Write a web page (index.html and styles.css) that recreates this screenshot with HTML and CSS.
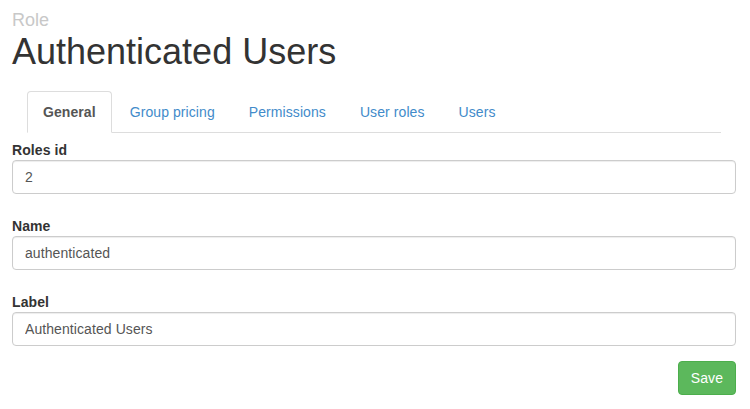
FILE: index.html
```html
<!DOCTYPE html>
<html>
<head>
<meta charset="utf-8">
<title>Role</title>
<link rel="stylesheet" href="styles.css">
</head>
<body>
<div class="page">
  <div class="subtitle">Role</div>
  <h1 class="title">Authenticated Users</h1>
  <div class="tabs-wrap">
    <ul class="tabs">
      <li class="tab active"><a href="#">General</a></li>
      <li class="tab"><a href="#">Group pricing</a></li>
      <li class="tab"><a href="#">Permissions</a></li>
      <li class="tab"><a href="#">User roles</a></li>
      <li class="tab"><a href="#">Users</a></li>
    </ul>
  </div>
  <form class="form">
    <div class="field first">
      <label class="label">Roles id</label>
      <input class="input" type="text" value="2">
    </div>
    <div class="field">
      <label class="label">Name</label>
      <input class="input" type="text" value="authenticated">
    </div>
    <div class="field">
      <label class="label">Label</label>
      <input class="input" type="text" value="Authenticated Users">
    </div>
    <div class="actions">
      <button type="button" class="btn-save">Save</button>
    </div>
  </form>
</div>
</body>
</html>
```
FILE: styles.css
```css
* { box-sizing: border-box; }
html, body { margin: 0; padding: 0; background: #fff; }
body {
  font-family: "Liberation Sans", Arial, sans-serif;
  font-size: 14px;
  line-height: 20px;
  letter-spacing: 0.08px;
  color: #333;
}
.page { padding: 10px 14px 0 12px; }
.subtitle {
  font-size: 18px;
  line-height: 20px;
  letter-spacing: 0;
  color: #c8c8c8;
}
.title {
  margin: 2px 0 0;
  font-size: 36px;
  line-height: 40px;
  font-weight: 500;
  letter-spacing: 0;
  color: #333;
}
.tabs-wrap { padding: 0 15px; margin-top: 19px; }
.tabs {
  list-style: none;
  margin: 0;
  padding: 0;
  display: flex;
  border-bottom: 1px solid #ddd;
}
.tab { margin-bottom: -1px; margin-right: 2px; }
.tab a {
  display: block;
  padding: 10px 15px;
  line-height: 20px;
  border: 1px solid transparent;
  border-radius: 4px 4px 0 0;
  color: #428bca;
  text-decoration: none;
}
.tab.active a {
  color: #555;
  font-weight: bold;
  background: #fff;
  border-color: #ddd #ddd transparent;
}
.form { display: flex; flex-direction: column; }
.field { margin-top: 22px; display: flex; flex-direction: column; }
.field.first { margin-top: 7px; }
.label { font-weight: bold; line-height: 20px; color: #333; }
.input {
  display: block;
  width: 100%;
  height: 34px;
  padding: 6px 12px;
  font-family: inherit;
  font-size: 14px;
  line-height: 20px;
  letter-spacing: 0.08px;
  color: #555;
  background: #fff;
  border: 1px solid #ccc;
  border-radius: 4px;
  box-shadow: inset 0 1px 1px rgba(0,0,0,.075);
}
.actions { display: flex; justify-content: flex-end; margin-top: 15px; }
.btn-save {
  height: 34px;
  padding: 6px 12px;
  font-family: inherit;
  font-size: 14px;
  line-height: 20px;
  letter-spacing: 0.08px;
  color: #fff;
  background: #5cb85c;
  border: 1px solid #4cae4c;
  border-radius: 4px;
}
```
